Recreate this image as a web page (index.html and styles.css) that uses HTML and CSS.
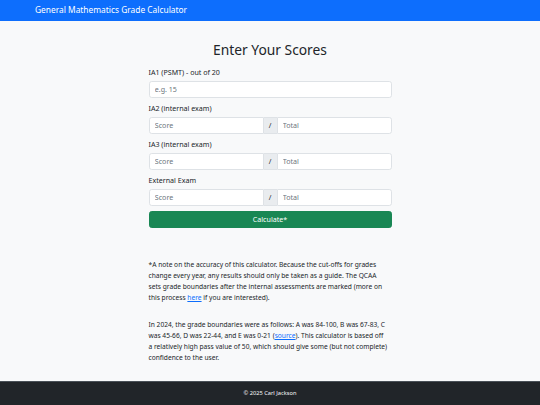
FILE: index.html
```html
<!DOCTYPE html>
<html lang="en">
<head>
<meta charset="utf-8">
<title>General Mathematics Grade Calculator</title>
<link rel="stylesheet" href="styles.css">
</head>
<body>
<nav class="navbar">
  <span class="brand">General Mathematics Grade Calculator</span>
</nav>
<main class="main">
  <div class="col">
    <h2 class="title">Enter Your Scores</h2>
    <div class="group">
      <label class="label">IA1 (PSMT) - out of 20</label>
      <input class="control" type="text" placeholder="e.g. 15">
    </div>
    <div class="group">
      <label class="label">IA2 (internal exam)</label>
      <div class="igroup">
        <input class="control" type="text" placeholder="Score">
        <span class="addon">/</span>
        <input class="control" type="text" placeholder="Total">
      </div>
    </div>
    <div class="group">
      <label class="label">IA3 (internal exam)</label>
      <div class="igroup">
        <input class="control" type="text" placeholder="Score">
        <span class="addon">/</span>
        <input class="control" type="text" placeholder="Total">
      </div>
    </div>
    <div class="group">
      <label class="label">External Exam</label>
      <div class="igroup">
        <input class="control" type="text" placeholder="Score">
        <span class="addon">/</span>
        <input class="control" type="text" placeholder="Total">
      </div>
    </div>
    <button class="btn" type="button">Calculate*</button>
    <p class="note"><small class="small">*A note on the accuracy of this calculator. Because the cut-offs for grades<br>change every year, any results should only be taken as a guide. The QCAA<br>sets grade boundaries after the internal assessments are marked (more on<br>this process <a href="#">here</a> if you are interested).</small></p>
    <p class="note second"><small class="small">In 2024, the grade boundaries were as follows: A was 84-100, B was 67-83, C<br>was 45-66, D was 22-44, and E was 0-21 (<a href="#">source</a>). This calculator is based off<br>a relatively high pass value of 50, which should give some (but not complete)<br>confidence to the user.</small></p>
  </div>
</main>
<footer class="footer">© 2025 Carl Jackson</footer>
</body>
</html>
```

FILE: styles.css
```css
* { box-sizing: border-box; }
html, body { margin: 0; padding: 0; }
body {
  font-family: "Noto Sans", "Open Sans", sans-serif;
  font-size: 7.1px;
  line-height: 1.5;
  color: #212529;
  background: #f8f9fa;
  min-height: 405px;
  display: flex;
  flex-direction: column;
}
.navbar {
  background: #0d6efd;
  height: 21px;
  display: flex;
  align-items: center;
  padding-left: 35px;
}
.brand {
  color: #fff;
  font-size: 8.4px;
  line-height: 1;
}
.main {
  flex: 1;
  padding-top: 19.5px;
}
.col {
  width: 243px;
  margin: 0 auto;
}
.title {
  margin: 0 0 9.5px;
  font-size: 13.8px;
  font-weight: 400;
  line-height: 17px;
  text-align: center;
}
.group { margin-bottom: 5.4px; }
.label {
  display: block;
  margin-bottom: 3.4px;
}
.control {
  display: block;
  width: 100%;
  height: 16.6px;
  padding: 0 5.3px;
  font: inherit;
  color: #212529;
  background: #fff;
  border: 0.5px solid #dee2e6;
  border-radius: 2.7px;
  outline: none;
}
.control::placeholder { color: #6c757d; opacity: 1; }
.igroup {
  display: flex;
}
.igroup .control {
  flex: 1;
  min-width: 0;
}
.igroup .control:first-child {
  border-top-right-radius: 0;
  border-bottom-right-radius: 0;
}
.igroup .control:last-child {
  border-top-left-radius: 0;
  border-bottom-left-radius: 0;
}
.addon {
  display: flex;
  align-items: center;
  padding: 0 5.2px;
  background: #e9ecef;
  border-top: 0.5px solid #dee2e6;
  border-bottom: 0.5px solid #dee2e6;
  color: #212529;
}
.btn {
  display: block;
  width: 100%;
  height: 16.6px;
  padding: 0;
  font: inherit;
  color: #fff;
  background: #198754;
  border: 0.5px solid #198754;
  border-radius: 2.7px;
}
.note {
  margin: 31.7px 0 0;
  white-space: nowrap;
}
.note.second {
  margin-top: 15.4px;
}
.small { font-size: 6.65px; }
.note a { color: #0d6efd; }
.footer {
  height: 24px;
  background: #212529;
  border-top: 1px solid #495057;
  color: #f8f9fa;
  font-size: 5.7px;
  display: flex;
  align-items: center;
  justify-content: center;
}
```
